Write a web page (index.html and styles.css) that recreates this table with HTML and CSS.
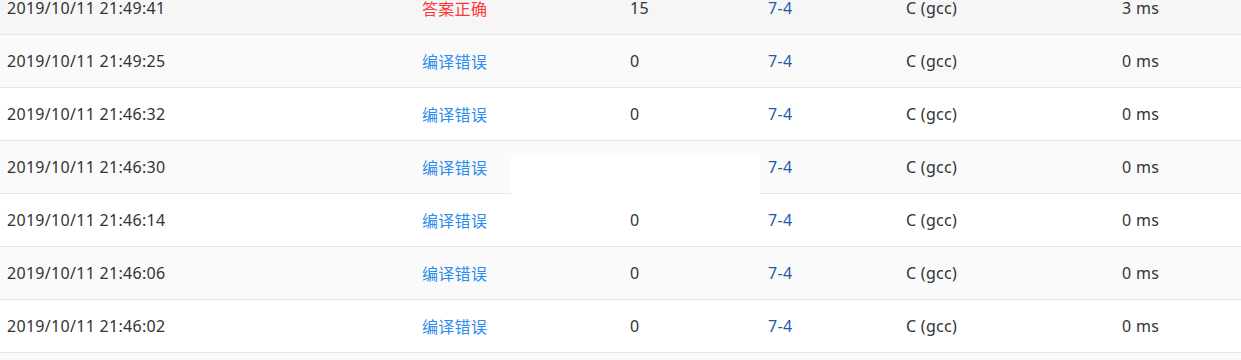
FILE: index.html
```html
<!DOCTYPE html>
<html lang="zh-CN">
<head>
<meta charset="utf-8">
<link rel="stylesheet" href="styles.css">
</head>
<body>
<div class="table">
  <div class="row hover"><div class="c date">2019/10/11 21:49:41</div><div class="c status ok">答案正确</div><div class="c score">15</div><div class="c prob">7-4</div><div class="c lang">C (gcc)</div><div class="c time">3 ms</div></div>
  <div class="row"><div class="c date">2019/10/11 21:49:25</div><div class="c status ce">编译错误</div><div class="c score">0</div><div class="c prob">7-4</div><div class="c lang">C (gcc)</div><div class="c time">0 ms</div></div>
  <div class="row"><div class="c date">2019/10/11 21:46:32</div><div class="c status ce">编译错误</div><div class="c score">0</div><div class="c prob">7-4</div><div class="c lang">C (gcc)</div><div class="c time">0 ms</div></div>
  <div class="row"><div class="c date">2019/10/11 21:46:30</div><div class="c status ce">编译错误</div><div class="c score">0</div><div class="c prob">7-4</div><div class="c lang">C (gcc)</div><div class="c time">0 ms</div><div class="mask"></div></div>
  <div class="row"><div class="c date">2019/10/11 21:46:14</div><div class="c status ce">编译错误</div><div class="c score">0</div><div class="c prob">7-4</div><div class="c lang">C (gcc)</div><div class="c time">0 ms</div></div>
  <div class="row"><div class="c date">2019/10/11 21:46:06</div><div class="c status ce">编译错误</div><div class="c score">0</div><div class="c prob">7-4</div><div class="c lang">C (gcc)</div><div class="c time">0 ms</div></div>
  <div class="row"><div class="c date">2019/10/11 21:46:02</div><div class="c status ce">编译错误</div><div class="c score">0</div><div class="c prob">7-4</div><div class="c lang">C (gcc)</div><div class="c time">0 ms</div></div>
  <div class="row-next"></div>
</div>
</body>
</html>
```

FILE: styles.css
```css
html, body {
  margin: 0;
  padding: 0;
  background: #fff;
  overflow: hidden;
}
body {
  font-family: "Noto Sans", "Noto Sans CJK SC", sans-serif;
  font-size: 16px;
  letter-spacing: 0.3px;
  color: #333;
}
.table {
  margin-top: -18px;
}
.row {
  position: relative;
  display: grid;
  grid-template-columns: 415px 208px 138px 138px 216px 1fr;
  height: 52px;
  align-items: center;
  border-bottom: 1px solid #e6e6e6;
  background: #fff;
}
.row:nth-child(even) {
  background: #fafafa;
}
.row.hover {
  background: #f6f6f6;
}
.row-next {
  height: 20px;
  background: #fafafa;
}
.c {
  padding-left: 7px;
  white-space: nowrap;
}
.ok { color: #ff3838; }
.ce { color: #2d8cf0; }
.prob { color: #1f5aa6; }
.mask {
  position: absolute;
  left: 511px;
  top: 14px;
  width: 249px;
  height: 39px;
  background: #fff;
}
```
